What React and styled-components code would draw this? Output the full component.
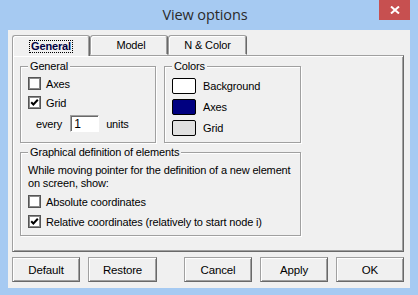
import React from "react";
import styled, { createGlobalStyle } from "styled-components";

const Global = createGlobalStyle`
  html, body { margin: 0; padding: 0; background: #a6caf2; }
  * { box-sizing: border-box; }
`;

const Window = styled.div`
  width: 418px;
  height: 295px;
  background: #a6caf2;
  display: flex;
  flex-direction: column;
  padding: 0 8px 7px 8px;
  font-family: "Liberation Sans", Arial, sans-serif;
  font-size: 11px;
  letter-spacing: -0.15px;
  color: #000;
`;

const TitleBar = styled.div`
  height: 30px;
  display: grid;
  grid-template-columns: 1fr auto 1fr;
  align-items: start;
  margin: 0 -8px;
  padding-right: 8px;
`;

const Title = styled.div`
  grid-column: 2;
  font-family: "Open Sans", "Noto Sans", sans-serif;
  font-size: 14.5px;
  line-height: 30px;
  color: #2b2b2b;
  letter-spacing: -0.1px;
`;

const CloseButton = styled.div`
  grid-column: 3;
  justify-self: end;
  width: 31px;
  height: 20px;
  background: #c75050;
  display: flex;
  align-items: center;
  justify-content: center;
`;

const Client = styled.div`
  flex: 1;
  background: #f0f0f0;
  padding: 5px 6px 6px 4px;
  display: flex;
  flex-direction: column;
  gap: 5px;
`;

const TabStrip = styled.div`
  display: flex;
  height: 20px;
  position: relative;
  z-index: 1;
`;

const Tab = styled.div`
  width: ${(p) => p.$w}px;
  height: ${(p) => (p.$active ? 21 : 20)}px;
  background: #f0f0f0;
  border-top: 1px solid #a0a0a0;
  border-left: 1px solid #a0a0a0;
  border-right: 1px solid #696969;
  border-bottom: ${(p) => (p.$active ? "none" : "1px solid transparent")};
  border-radius: 3px 3px 0 0;
  box-shadow: inset 1px 1px 0 #fff, inset -1px 0 0 #a0a0a0;
  display: flex;
  align-items: center;
  justify-content: center;
  padding-left: ${(p) => p.$pl || 0}px;
  font-weight: ${(p) => (p.$active ? 700 : 400)};
`;

const Focus = styled.span`
  outline: 1px dotted #000;
  outline-offset: 0px;
  padding: 0 1px;
  line-height: 11px;
  color: #000040;
`;

const Panel = styled.div`
  height: 197px;
  border-top: 1px solid #a0a0a0;
  border-left: 1px solid #a0a0a0;
  border-right: 1px solid #696969;
  border-bottom: 1px solid #696969;
  box-shadow: inset 1px 1px 0 #fff, inset -1px -1px 0 #a0a0a0;
  padding: 10px 0 0 7px;
  display: flex;
  flex-direction: column;
  gap: 9px;
`;

const Row = styled.div`
  display: flex;
  gap: 8px;
`;

const Group = styled.div`
  position: relative;
  width: ${(p) => p.$w}px;
  height: ${(p) => p.$h}px;
  border: 1px solid #a0a0a0;
  box-shadow: inset 1px 1px 0 #fff, 1px 1px 0 #fff;
  padding: ${(p) => p.$pt}px 0 0 7px;
  display: flex;
  flex-direction: column;
  gap: ${(p) => p.$gap}px;
`;

const Legend = styled.span`
  position: absolute;
  top: -8px;
  left: 7px;
  background: #f0f0f0;
  padding: 0 2px;
  line-height: 14px;
`;

const CheckRow = styled.div`
  display: flex;
  align-items: center;
  gap: 5px;
  height: 13px;
  margin-top: ${(p) => p.$mt || 0}px;
`;

const Box = styled.span`
  width: 13px;
  height: 13px;
  flex: none;
  background: #fff;
  border: 1px solid #555;
  box-shadow: inset 0 0 0 1px #8a8a8a;
  display: flex;
  align-items: center;
  justify-content: center;
`;

const EveryRow = styled.div`
  display: flex;
  align-items: center;
  height: 17px;
  padding-left: 8px;
`;

const NumInput = styled.div`
  width: 29px;
  height: 17px;
  margin: 0 7px 0 8px;
  background: #fff;
  border-top: 1px solid #a0a0a0;
  border-left: 1px solid #a0a0a0;
  border-right: 1px solid #fff;
  border-bottom: 1px solid #fff;
  box-shadow: inset 1px 1px 0 #696969;
  padding-left: 3px;
  display: flex;
  align-items: center;
  font-size: 12px;
`;

const ColorRow = styled.div`
  display: flex;
  align-items: center;
  gap: 7px;
  height: 16px;
`;

const Swatch = styled.span`
  width: 24px;
  height: 16px;
  border: 1px solid #000;
  border-radius: 2px;
  background: ${(p) => p.$c};
`;

const Text = styled.div`
  line-height: 13px;
`;

const Buttons = styled.div`
  display: flex;
  justify-content: space-between;
  height: 25px;
`;

const ButtonGroup = styled.div`
  display: flex;
  gap: 8px;
`;

const Button = styled.div`
  width: ${(p) => p.$w || 68}px;
  height: 25px;
  background: #f0f0f0;
  border-top: 1px solid #a0a0a0;
  border-left: 1px solid #a0a0a0;
  border-right: 1px solid #696969;
  border-bottom: 1px solid #696969;
  box-shadow: inset 1px 1px 0 #fff, inset -1px -1px 0 #a0a0a0;
  display: flex;
  align-items: center;
  justify-content: center;
  font-size: 11.5px;
`;

const Check = () => (
  <svg width="9" height="9" viewBox="0 0 9 9">
    <polyline points="1.2,4.2 3.4,6.5 7.8,1.8" fill="none" stroke="#000" strokeWidth="2" />
  </svg>
);

const CheckBox = ({ checked, children, mt }) => (
  <CheckRow $mt={mt}>
    <Box>{checked && <Check />}</Box>
    <span>{children}</span>
  </CheckRow>
);

export default function App() {
  return (
    <>
      <Global />
      <Window>
        <TitleBar>
          <Title>View options</Title>
          <CloseButton>
            <svg width="10" height="8" viewBox="0 0 10 8">
              <path d="M1 0.5 L9 7.5 M9 0.5 L1 7.5" stroke="#fff" strokeWidth="2" />
            </svg>
          </CloseButton>
        </TitleBar>
        <Client>
          <div>
            <TabStrip>
              <Tab $w={78} $active>
                <Focus>General</Focus>
              </Tab>
              <Tab $w={78} $pl={4}>Model</Tab>
              <Tab $w={79}>N &amp; Color</Tab>
            </TabStrip>
            <Panel>
              <Row>
                <Group $w={136} $h={77} $pt={10} $gap={6}>
                  <Legend>General</Legend>
                  <CheckBox>Axes</CheckBox>
                  <CheckBox checked>Grid</CheckBox>
                  <EveryRow>
                    every
                    <NumInput>1</NumInput>
                    units
                  </EveryRow>
                </Group>
                <Group $w={137} $h={77} $pt={11} $gap={5}>
                  <Legend>Colors</Legend>
                  <ColorRow>
                    <Swatch $c="#ffffff" />
                    Background
                  </ColorRow>
                  <ColorRow>
                    <Swatch $c="#000080" />
                    Axes
                  </ColorRow>
                  <ColorRow>
                    <Swatch $c="#e0e0e0" />
                    Grid
                  </ColorRow>
                </Group>
              </Row>
              <Group $w={281} $h={84} $pt={11} $gap={0}>
                <Legend>Graphical definition of elements</Legend>
                <Text>While moving pointer for the definition of a new element</Text>
                <Text>on screen, show:</Text>
                <CheckBox mt={5}>Absolute coordinates</CheckBox>
                <CheckBox mt={7} checked>
                  Relative coordinates (relatively to start node i)
                </CheckBox>
              </Group>
            </Panel>
          </div>
          <Buttons>
            <ButtonGroup>
              <Button>Default</Button>
              <Button $w={69}>Restore</Button>
            </ButtonGroup>
            <ButtonGroup>
              <Button>Cancel</Button>
              <Button>Apply</Button>
              <Button>OK</Button>
            </ButtonGroup>
          </Buttons>
        </Client>
      </Window>
    </>
  );
}
